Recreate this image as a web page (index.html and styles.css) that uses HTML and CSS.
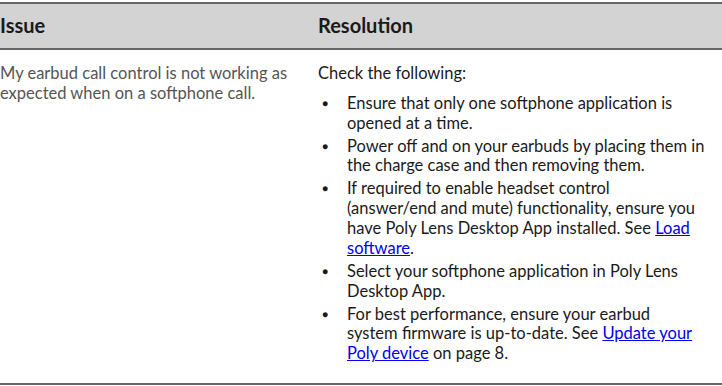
FILE: index.html
```html
<!DOCTYPE html>
<html>
<head>
  <link rel="stylesheet" href="styles.css">
</head>
<body>
  <table class="trouble">
    <thead>
      <tr>
        <th class="col-issue">Issue</th>
        <th>Resolution</th>
      </tr>
    </thead>
    <tbody>
      <tr>
        <td class="issue">My earbud call control is not working as<br>expected when on a softphone call.</td>
        <td class="resolution">
          <p>Check the following:</p>
          <ul>
            <li>Ensure that only one softphone application is<br>opened at a time.</li>
            <li>Power off and on your earbuds by placing them in<br>the charge case and then removing them.</li>
            <li>If required to enable headset control<br>(answer/end and mute) functionality, ensure you<br>have Poly Lens Desktop App installed. See <a href="#">Load<br>software</a>.</li>
            <li>Select your softphone application in Poly Lens<br>Desktop App.</li>
            <li>For best performance, ensure your earbud<br>system firmware is up-to-date. See <a href="#">Update your<br>Poly device</a> on page 8.</li>
          </ul>
        </td>
      </tr>
    </tbody>
  </table>
</body>
</html>
```

FILE: styles.css
```css
body {
  margin: 0;
  padding-top: 2px;
  font-family: Lato, "Open Sans", sans-serif;
  background: #fff;
}

.trouble {
  width: 100%;
  border-collapse: collapse;
  border-top: 2px solid #666;
  border-bottom: 2px solid #666;
  font-size: 16.5px;
  line-height: 19.8px;
}

.trouble th {
  background: #d3d3d3;
  border-bottom: 2px solid #666;
  text-align: left;
  font-size: 20px;
  font-weight: bold;
  color: #1a1a1a;
  height: 44px;
  padding: 0;
  vertical-align: middle;
}

.trouble th.col-issue {
  width: 318px;
}

.trouble td {
  vertical-align: top;
  padding: 14px 0 19px 0;
  white-space: nowrap;
}

.issue {
  color: #555;
  padding-right: 12px;
}

.trouble td.resolution {
  color: #1a1a1a;
  padding-right: 8px;
}

.resolution p {
  margin: 0 0 10px 0;
}

.resolution ul {
  list-style: none;
  margin: 0;
  padding-left: 29px;
}

.resolution li {
  margin-top: 3.2px;
}

.resolution li:first-child {
  margin-top: 0;
}

.resolution li::before {
  content: "\25CF";
  display: inline-block;
  width: 25px;
  margin-left: -25px;
  font-size: 10px;
  vertical-align: 2px;
}

.resolution a {
  color: #0000ee;
}
```
